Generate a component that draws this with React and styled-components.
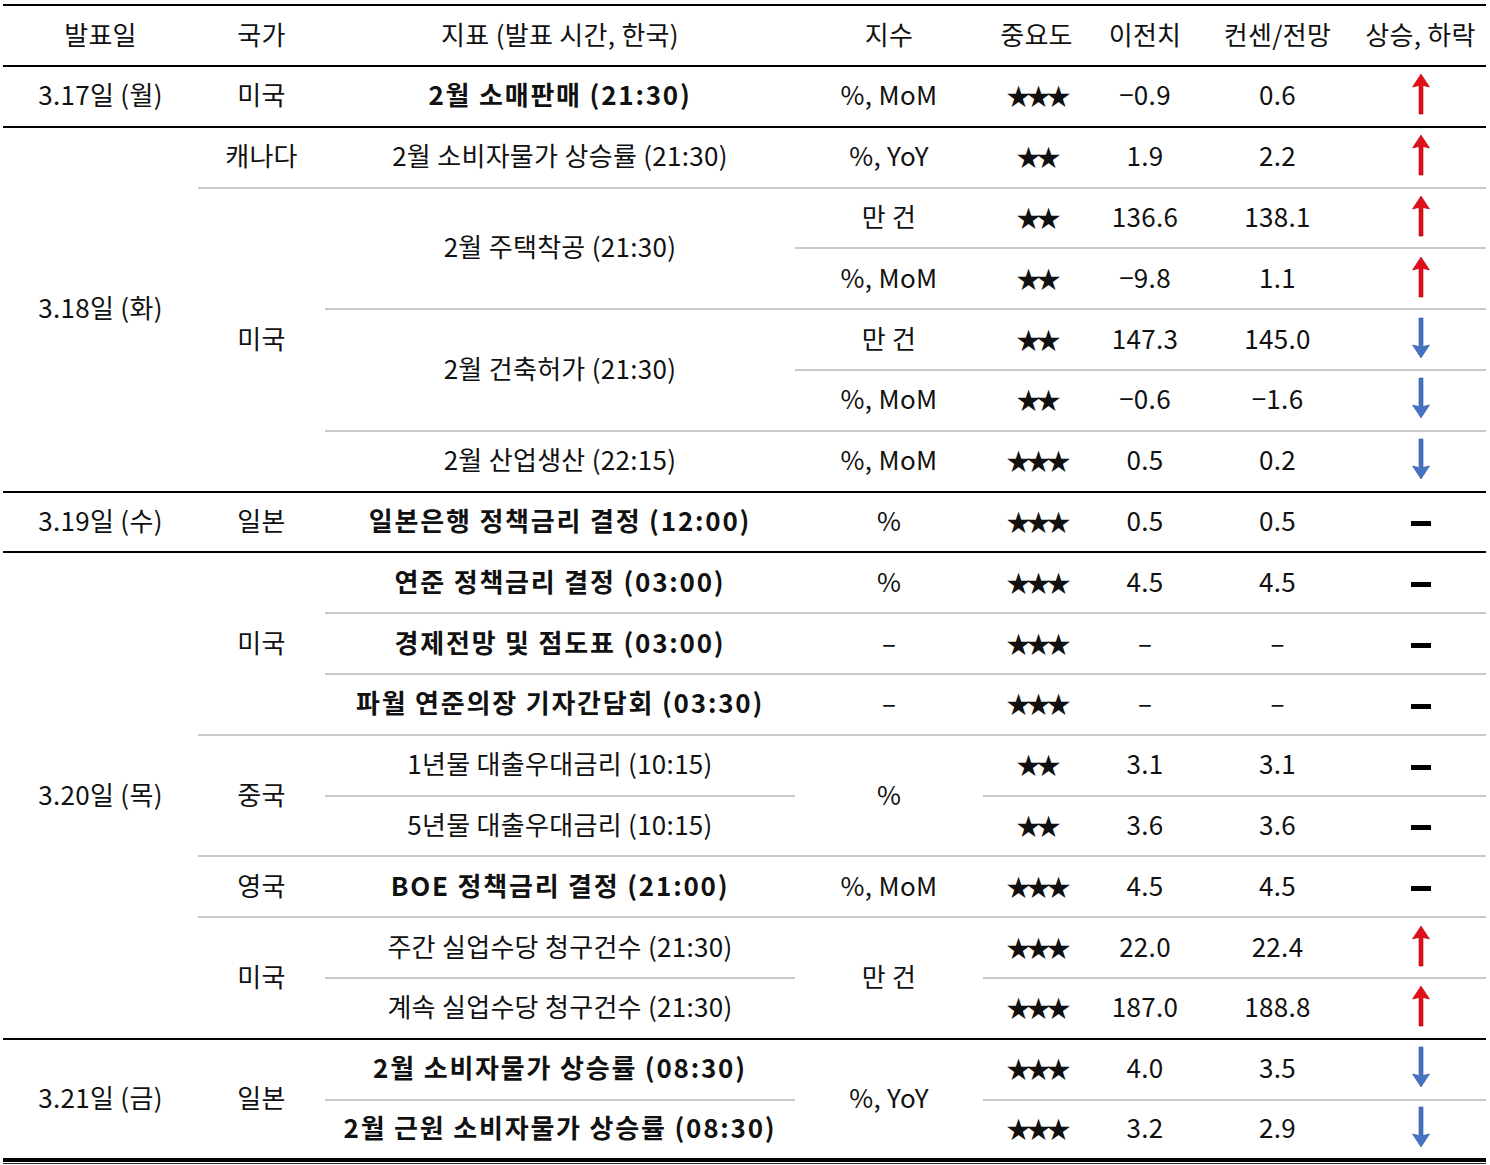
import React from 'react';
import styled, { createGlobalStyle } from 'styled-components';

const GlobalStyle = createGlobalStyle`
  html, body {
    margin: 0;
    padding: 0;
    background: #ffffff;
  }
  body {
    font-family: "Noto Sans CJK KR", "Noto Sans", sans-serif;
    color: #111111;
  }
`;

const Page = styled.div`
  padding: 4px 4px 0 3px;
`;

const Frame = styled.div`
  width: 1483px;
  border-bottom: 1px solid #222222;
  padding-bottom: 1px;
`;

const Table = styled.table`
  width: 1483px;
  table-layout: fixed;
  border-collapse: collapse;
  border-top: 2px solid #000;
  border-bottom: 4px solid #000;
  font-size: 26px;
  line-height: 1;
  letter-spacing: 0.3px;
`;

const HeadCell = styled.th`
  height: 56px;
  padding: 0 0 3px;
  font-weight: 400;
  text-align: center;
  vertical-align: middle;
  white-space: nowrap;
`;

const Row = styled.tr`
  height: 60.8px;
  & > td {
    border-top: 2px solid ${(p) => (p.$group ? '#000000' : '#c9c9c9')};
  }
`;

const Cell = styled.td`
  padding: 0 0 4px;
  text-align: center;
  vertical-align: middle;
  white-space: nowrap;
  font-weight: ${(p) => (p.$bold ? 700 : 400)};
  letter-spacing: ${(p) => (p.$bold ? '1.8px' : '0.3px')};
`;

const Stars = styled.span`
  letter-spacing: -4px;
  font-size: 24px;
`;

const Dash = styled.span`
  display: inline-block;
  width: 20px;
  height: 5px;
  background: #000;
  vertical-align: middle;
`;

const ArrowBox = styled.svg`
  display: block;
  margin: 0 auto;
`;

const Arrow = ({ dir }) => {
  const color = dir === 'up' ? '#e0101a' : '#4472c4';
  const edge = dir === 'up' ? '#b5000a' : '#2f5597';
  return (
    <ArrowBox width="20" height="42" viewBox="0 0 20 42">
      <g transform={dir === 'up' ? '' : 'rotate(180 10 21)'}>
        <path
          d="M10 1 L18.5 14 L12 12.5 L12 41 L8 41 L8 12.5 L1.5 14 Z"
          fill={color}
          stroke={edge}
          strokeWidth="0.6"
        />
      </g>
    </ArrowBox>
  );
};

const Trend = ({ t }) => {
  if (t === 'flat') return <Dash />;
  return <Arrow dir={t} />;
};

const columns = [195, 127, 470, 188, 107, 110, 155, 131];
const heads = ['발표일', '국가', '지표 (발표 시간, 한국)', '지수', '중요도', '이전치', '컨센/전망', '상승, 하락'];

// each row: cells in order, with rowSpan and bold where needed
const rows = [
  {
    group: true,
    cells: [
      { v: '3.17일 (월)' },
      { v: '미국' },
      { v: '2월 소매판매 (21:30)', bold: true },
      { v: '%, MoM' },
      { stars: 3 },
      { v: '−0.9' },
      { v: '0.6' },
      { t: 'up' },
    ],
  },
  {
    group: true,
    cells: [
      { v: '3.18일 (화)', span: 6 },
      { v: '캐나다' },
      { v: '2월 소비자물가 상승률 (21:30)' },
      { v: '%, YoY' },
      { stars: 2 },
      { v: '1.9' },
      { v: '2.2' },
      { t: 'up' },
    ],
  },
  {
    cells: [
      { v: '미국', span: 5 },
      { v: '2월 주택착공 (21:30)', span: 2 },
      { v: '만 건' },
      { stars: 2 },
      { v: '136.6' },
      { v: '138.1' },
      { t: 'up' },
    ],
  },
  {
    cells: [
      { v: '%, MoM' },
      { stars: 2 },
      { v: '−9.8' },
      { v: '1.1' },
      { t: 'up' },
    ],
  },
  {
    cells: [
      { v: '2월 건축허가 (21:30)', span: 2 },
      { v: '만 건' },
      { stars: 2 },
      { v: '147.3' },
      { v: '145.0' },
      { t: 'down' },
    ],
  },
  {
    cells: [
      { v: '%, MoM' },
      { stars: 2 },
      { v: '−0.6' },
      { v: '−1.6' },
      { t: 'down' },
    ],
  },
  {
    cells: [
      { v: '2월 산업생산 (22:15)' },
      { v: '%, MoM' },
      { stars: 3 },
      { v: '0.5' },
      { v: '0.2' },
      { t: 'down' },
    ],
  },
  {
    group: true,
    cells: [
      { v: '3.19일 (수)' },
      { v: '일본' },
      { v: '일본은행 정책금리 결정 (12:00)', bold: true },
      { v: '%' },
      { stars: 3 },
      { v: '0.5' },
      { v: '0.5' },
      { t: 'flat' },
    ],
  },
  {
    group: true,
    cells: [
      { v: '3.20일 (목)', span: 8 },
      { v: '미국', span: 3 },
      { v: '연준 정책금리 결정 (03:00)', bold: true },
      { v: '%' },
      { stars: 3 },
      { v: '4.5' },
      { v: '4.5' },
      { t: 'flat' },
    ],
  },
  {
    cells: [
      { v: '경제전망 및 점도표 (03:00)', bold: true },
      { v: '–' },
      { stars: 3 },
      { v: '–' },
      { v: '–' },
      { t: 'flat' },
    ],
  },
  {
    cells: [
      { v: '파월 연준의장 기자간담회 (03:30)', bold: true },
      { v: '–' },
      { stars: 3 },
      { v: '–' },
      { v: '–' },
      { t: 'flat' },
    ],
  },
  {
    cells: [
      { v: '중국', span: 2 },
      { v: '1년물 대출우대금리 (10:15)' },
      { v: '%', span: 2 },
      { stars: 2 },
      { v: '3.1' },
      { v: '3.1' },
      { t: 'flat' },
    ],
  },
  {
    cells: [
      { v: '5년물 대출우대금리 (10:15)' },
      { stars: 2 },
      { v: '3.6' },
      { v: '3.6' },
      { t: 'flat' },
    ],
  },
  {
    cells: [
      { v: '영국' },
      { v: 'BOE 정책금리 결정 (21:00)', bold: true },
      { v: '%, MoM' },
      { stars: 3 },
      { v: '4.5' },
      { v: '4.5' },
      { t: 'flat' },
    ],
  },
  {
    cells: [
      { v: '미국', span: 2 },
      { v: '주간 실업수당 청구건수 (21:30)' },
      { v: '만 건', span: 2 },
      { stars: 3 },
      { v: '22.0' },
      { v: '22.4' },
      { t: 'up' },
    ],
  },
  {
    cells: [
      { v: '계속 실업수당 청구건수 (21:30)' },
      { stars: 3 },
      { v: '187.0' },
      { v: '188.8' },
      { t: 'up' },
    ],
  },
  {
    group: true,
    cells: [
      { v: '3.21일 (금)', span: 2 },
      { v: '일본', span: 2 },
      { v: '2월 소비자물가 상승률 (08:30)', bold: true },
      { v: '%, YoY', span: 2 },
      { stars: 3 },
      { v: '4.0' },
      { v: '3.5' },
      { t: 'down' },
    ],
  },
  {
    cells: [
      { v: '2월 근원 소비자물가 상승률 (08:30)', bold: true },
      { stars: 3 },
      { v: '3.2' },
      { v: '2.9' },
      { t: 'down' },
    ],
  },
];

const renderCell = (c, i) => {
  let content = c.v;
  if (c.stars) content = <Stars>{'★'.repeat(c.stars)}</Stars>;
  if (c.t) content = <Trend t={c.t} />;
  return (
    <Cell key={i} rowSpan={c.span} $bold={c.bold}>
      {content}
    </Cell>
  );
};

const App = () => (
  <>
    <GlobalStyle />
    <Page>
      <Frame>
        <Table>
          <colgroup>
            {columns.map((w, i) => (
              <col key={i} style={{ width: w }} />
            ))}
          </colgroup>
          <thead>
            <tr>
              {heads.map((h) => (
                <HeadCell key={h}>{h}</HeadCell>
              ))}
            </tr>
          </thead>
          <tbody>
            {rows.map((r, i) => (
              <Row key={i} $group={r.group}>
                {r.cells.map(renderCell)}
              </Row>
            ))}
          </tbody>
        </Table>
      </Frame>
    </Page>
  </>
);

export default App;
